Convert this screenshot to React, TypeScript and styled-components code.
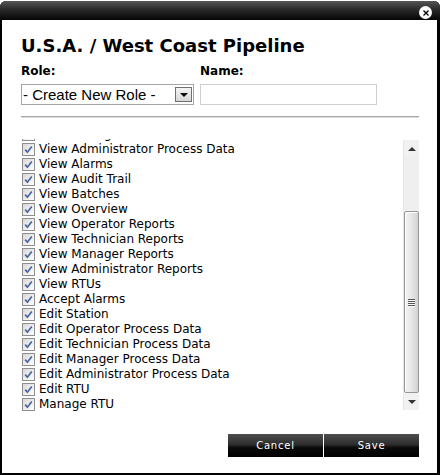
import React from "react";
import styled, { createGlobalStyle } from "styled-components";

const GlobalStyle = createGlobalStyle`
  html, body { margin: 0; padding: 0; background: #fff; }
  body { font-family: "DejaVu Sans", Verdana, sans-serif; color: #000; }
  * { box-sizing: border-box; }
`;

const Frame = styled.div`
  width: 440px;
  height: 474px;
  margin-top: 1px;
  background: #000;
  border-radius: 6px 6px 0 0;
  display: flex;
  flex-direction: column;
`;

const TitleBar = styled.div`
  position: relative;
  height: 19px;
  flex: none;
  border-radius: 6px 6px 0 0;
  background: linear-gradient(to bottom, #565656 0%, #2a2a2a 45%, #050505 100%);
`;

const CloseButton = styled.button`
  position: absolute;
  right: 8px;
  top: 5px;
  width: 13px;
  height: 13px;
  padding: 0;
  border: none;
  border-radius: 50%;
  background: #fff;
  display: flex;
  align-items: center;
  justify-content: center;
  cursor: pointer;
`;

const Body = styled.div`
  flex: 1;
  margin: 0 3px 2px 2px;
  background: #fff;
  padding: 15px 18px 0 19px;
  display: flex;
  flex-direction: column;
`;

const Title = styled.h1`
  margin: 0;
  font-size: 18px;
  line-height: 22px;
  font-weight: bold;
`;

const FieldGrid = styled.div`
  margin-top: 7px;
  display: grid;
  grid-template-columns: 179px auto;
  row-gap: 6px;
`;

const Label = styled.label`
  font-size: 12px;
  line-height: 14px;
  font-weight: bold;
`;

const SelectBox = styled.div`
  width: 173px;
  height: 21px;
  border: 1px solid #a5a5a5;
  padding-left: 1px;
  display: flex;
  align-items: center;
  justify-content: space-between;
  font-family: "Liberation Sans", Arial, sans-serif;
  font-size: 15px;
  background: #fff;
`;

const DropButton = styled.span`
  width: 17px;
  height: 15px;
  margin-right: 1px;
  border: 1px solid #6f6f6f;
  background: linear-gradient(to bottom, #f4f4f4, #d6d6d6);
  display: flex;
  align-items: center;
  justify-content: center;
`;

const DownTriangle = styled.span<{ $color?: string }>`
  width: 0;
  height: 0;
  border-left: 4px solid transparent;
  border-right: 4px solid transparent;
  border-top: 4px solid ${(p) => p.$color || "#000"};
`;

const UpTriangle = styled.span`
  width: 0;
  height: 0;
  border-left: 4px solid transparent;
  border-right: 4px solid transparent;
  border-bottom: 4px solid #333;
`;

const TextInput = styled.input`
  width: 177px;
  height: 21px;
  border: 1px solid #cfcfcf;
  padding: 0 2px;
  font-family: "Liberation Sans", Arial, sans-serif;
  font-size: 13px;
  outline: none;
`;

const Rule = styled.hr`
  margin: 11px 0 0 0;
  height: 2px;
  border: none;
  border-top: 1px solid #a6a6a6;
  border-bottom: 1px solid #dedede;
`;

const ListWrap = styled.div`
  margin-top: 21px;
  height: 273px;
  display: flex;
`;

const List = styled.div`
  flex: 1;
  overflow: hidden;
  display: flex;
  flex-direction: column;
  justify-content: flex-end;
`;

const Row = styled.label`
  flex: none;
  height: 15px;
  display: flex;
  align-items: center;
  gap: 4px;
  padding-left: 1px;
  font-size: 12px;
  line-height: 15px;
  white-space: nowrap;
`;

const Box = styled.span`
  width: 13px;
  height: 13px;
  flex: none;
  border: 1px solid #8f8f8f;
  background: linear-gradient(135deg, #d8d8d8 0%, #f0f0f0 60%, #fdfdfd 100%);
  display: flex;
  align-items: center;
  justify-content: center;
`;

const ScrollBar = styled.div`
  width: 16px;
  margin-top: 1px;
  height: 270px;
  display: flex;
  flex-direction: column;
  background: #f0f0f0;
  border-left: 1px solid #e6e6e6;
`;

const ArrowButton = styled.div`
  height: 17px;
  flex: none;
  display: flex;
  align-items: center;
  justify-content: center;
  background: #f1f1f1;
`;

const Track = styled.div`
  flex: 1;
  display: flex;
  flex-direction: column;
  justify-content: flex-end;
  background: #efefef;
`;

const Thumb = styled.div`
  height: 182px;
  border: 1px solid #979797;
  border-radius: 2px;
  background: linear-gradient(to right, #f2f2f2 0%, #e8e8e8 45%, #d2d2d2 100%);
  box-shadow: inset 1px 1px 0 #fff;
  display: flex;
  align-items: center;
  justify-content: center;
`;

const Grip = styled.div`
  width: 7px;
  display: flex;
  flex-direction: column;
  gap: 1px;
`;

const GripLine = styled.span`
  height: 1px;
  background: #555;
  box-shadow: 0 1px 0 #fafafa;
`;

const Footer = styled.div`
  margin-top: 22px;
  display: flex;
  justify-content: flex-end;
  gap: 1px;
`;

const DarkButton = styled.button`
  width: 95px;
  height: 23px;
  border: none;
  padding: 0;
  color: #fff;
  font-family: "DejaVu Sans", Verdana, sans-serif;
  font-size: 10px;
  letter-spacing: 0.8px;
  background: linear-gradient(to bottom, #4e4e4e 0%, #2e2e2e 45%, #0a0a0a 60%, #000 100%);
  cursor: pointer;
`;

const items = [
  "View Manager Process Data",
  "View Administrator Process Data",
  "View Alarms",
  "View Audit Trail",
  "View Batches",
  "View Overview",
  "View Operator Reports",
  "View Technician Reports",
  "View Manager Reports",
  "View Administrator Reports",
  "View RTUs",
  "Accept Alarms",
  "Edit Station",
  "Edit Operator Process Data",
  "Edit Technician Process Data",
  "Edit Manager Process Data",
  "Edit Administrator Process Data",
  "Edit RTU",
  "Manage RTU",
];

const CheckBox = () => (
  <Box>
    <svg width="9" height="9" viewBox="0 0 9 9">
      <path d="M1.2 4.6 L3.4 7.2 L7.8 1.4" fill="none" stroke="#4b65a3" strokeWidth="1.7" />
    </svg>
  </Box>
);

export default function App() {
  return (
    <>
      <GlobalStyle />
      <Frame>
        <TitleBar>
          <CloseButton aria-label="Close">
            <svg width="6" height="6" viewBox="0 0 6 6">
              <path d="M0.5 0.5 L5.5 5.5 M5.5 0.5 L0.5 5.5" stroke="#000" strokeWidth="1.3" />
            </svg>
          </CloseButton>
        </TitleBar>
        <Body>
          <Title>U.S.A. / West Coast Pipeline</Title>
          <FieldGrid>
            <Label>Role:</Label>
            <Label>Name:</Label>
            <SelectBox>
              <span>- Create New Role -</span>
              <DropButton>
                <DownTriangle />
              </DropButton>
            </SelectBox>
            <TextInput type="text" />
          </FieldGrid>
          <Rule />
          <ListWrap>
            <List>
              {items.map((name) => (
                <Row key={name}>
                  <CheckBox />
                  <span>{name}</span>
                </Row>
              ))}
            </List>
            <ScrollBar>
              <ArrowButton>
                <UpTriangle />
              </ArrowButton>
              <Track>
                <Thumb>
                  <Grip>
                    <GripLine />
                    <GripLine />
                    <GripLine />
                    <GripLine />
                  </Grip>
                </Thumb>
              </Track>
              <ArrowButton>
                <DownTriangle $color="#333" />
              </ArrowButton>
            </ScrollBar>
          </ListWrap>
          <Footer>
            <DarkButton>Cancel</DarkButton>
            <DarkButton>Save</DarkButton>
          </Footer>
        </Body>
      </Frame>
    </>
  );
}
